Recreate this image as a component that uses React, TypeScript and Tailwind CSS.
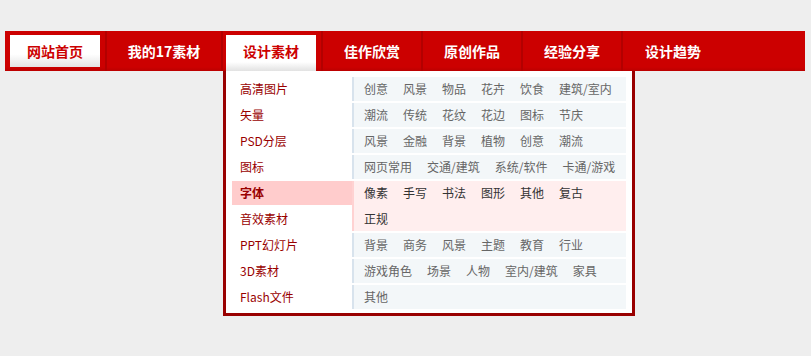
import React from 'react';

const navItems = [
    { label: '网站首页', cls: 'w-[102px] border-r-2', home: true },
    { label: '我的17素材', cls: 'w-[116px] border-r-2' },
    { label: '设计素材', cls: 'w-[100px] border-r-2', active: true },
    { label: '佳作欣赏', cls: 'w-[100px] border-r-2' },
    { label: '原创作品', cls: 'w-[100px] border-r-2' },
    { label: '经验分享', cls: 'w-[100px] border-r-2' },
    { label: '设计趋势', cls: 'w-[100px]' },
];

const categories = ['高清图片', '矢量', 'PSD分层', '图标', '字体', '音效素材', 'PPT幻灯片', '3D素材', 'Flash文件'];

const tags: { items: string[]; hot?: boolean }[] = [
    { items: ['创意', '风景', '物品', '花卉', '饮食', '建筑/室内'] },
    { items: ['潮流', '传统', '花纹', '花边', '图标', '节庆'] },
    { items: ['风景', '金融', '背景', '植物', '创意', '潮流'] },
    { items: ['网页常用', '交通/建筑', '系统/软件', '卡通/游戏'] },
    { items: ['像素', '手写', '书法', '图形', '其他', '复古', '正规'], hot: true },
    { items: ['背景', '商务', '风景', '主题', '教育', '行业'] },
    { items: ['游戏角色', '场景', '人物', '室内/建筑', '家具'] },
    { items: ['其他'] },
];

const Dropdown: React.FC = () => {
    return (
        <div className="absolute left-0 top-[40px] z-10 w-[412px] border-x-[3px] border-b-[3px] border-[#990000] bg-white px-[6px] pt-[6px] pb-[2px]">
            <div className="flex">
                {/* left: main categories */}
                <ul className="w-[120px] flex-none">
                    {categories.map((c) => (
                        <li
                            key={c}
                            className={
                                c === '字体'
                                    ? 'mb-[2px] h-[24px] bg-[#ffcccc] pl-[8px] text-[12px] leading-[24px] font-bold text-[#990000]'
                                    : 'mb-[2px] h-[24px] pl-[8px] text-[12px] leading-[24px] text-[#990000]'
                            }
                        >
                            {c}
                        </li>
                    ))}
                </ul>
                {/* right: sub tags */}
                <div className="flex-1">
                    {tags.map((row, i) => (
                        <div
                            key={i}
                            className={
                                row.hot
                                    ? 'mb-[2px] flex flex-wrap gap-x-[15px] gap-y-[2px] border-l-2 border-[#ffd2d2] bg-[#ffeeee] pl-[10px] pr-[8px] text-[12px] leading-[24px] text-[#333333]'
                                    : 'mb-[2px] flex flex-wrap gap-x-[15px] gap-y-[2px] border-l-2 border-[#d8e3ed] bg-[#f3f7f9] pl-[10px] pr-[8px] text-[12px] leading-[24px] text-[#666666]'
                            }
                        >
                            {row.items.map((t, j) => (
                                <a key={j} className="cursor-pointer whitespace-nowrap">{t}</a>
                            ))}
                        </div>
                    ))}
                </div>
            </div>
        </div>
    );
};

const App: React.FC = () => {
    return (
        <div className="min-h-screen bg-[#eeeeee] px-[5px] pt-[31px] font-['Noto_Sans_CJK_SC','Noto_Sans',sans-serif]">
            <ul className="flex h-[40px] w-[800px] bg-linear-to-b from-[#cc0000] from-90% to-[#bb0000]">
                {navItems.map((n) => (
                    <li key={n.label} className={`relative flex-none border-[#b30000] ${n.cls}`}>
                        {n.home && (
                            <div className="ml-[5px] mt-[4px] flex h-[32px] w-[90px] items-center justify-center bg-linear-to-b from-white from-60% to-[#e4e4e4] text-[14px] font-bold text-[#cc0000]">
                                {n.label}
                            </div>
                        )}
                        {n.active && (
                            <>
                                <div className="ml-[3px] mt-[4px] flex h-[36px] w-[90px] items-center justify-center bg-linear-to-b from-white from-75% to-[#e2e2e2] pb-[4px] text-[14px] font-bold text-[#cc0000]">
                                    {n.label}
                                </div>
                                <Dropdown />
                            </>
                        )}
                        {!n.home && !n.active && (
                            <div className="flex h-full items-center justify-center text-[14px] font-bold text-white">
                                {n.label}
                            </div>
                        )}
                    </li>
                ))}
            </ul>
        </div>
    );
};

export default App;
